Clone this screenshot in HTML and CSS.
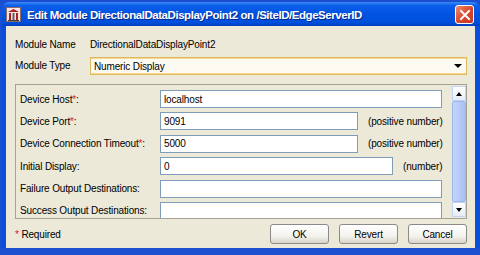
FILE: index.html
```html
<!DOCTYPE html>
<html lang="en">
<head>
    <meta charset="UTF-8">
    <title>Edit Module</title>
    <link rel="stylesheet" href="styles.css">
</head>
<body>
    <div class="window">
        <div class="title-bar">
            <svg class="title-icon" width="15" height="15" viewBox="0 0 15 15">
                <rect x="0.5" y="0.5" width="14" height="14" fill="#f4e4e4" stroke="#8a6a6a"/>
                <path d="M2 5 L7.5 2 L13 5 Z" fill="#b02020"/>
                <rect x="3" y="6" width="2" height="7" fill="#b02020"/>
                <rect x="6.5" y="6" width="2" height="7" fill="#606060"/>
                <rect x="10" y="6" width="2" height="7" fill="#b02020"/>
                <rect x="2" y="13" width="11" height="1" fill="#404040"/>
            </svg>
            <span class="title-text">Edit Module DirectionalDataDisplayPoint2 on /SiteID/EdgeServerID</span>
            <button class="close-btn">
                <svg width="12" height="12" viewBox="0 0 12 12">
                    <path d="M2 2 L10 10 M10 2 L2 10" stroke="white" stroke-width="2" stroke-linecap="square"/>
                </svg>
            </button>
        </div>

        <div class="content">
            <div class="top-row">
                <span class="top-label">Module Name</span>
                <span>DirectionalDataDisplayPoint2</span>
            </div>
            <div class="top-row">
                <span class="top-label">Module Type</span>
                <div class="combo">
                    <span>Numeric Display</span>
                    <span class="combo-arrow"></span>
                </div>
            </div>

            <div class="panel">
                <div class="fields">
                    <div class="field">
                        <label>Device Host<span class="req">*</span>:</label>
                        <input type="text" class="wide" value="localhost">
                    </div>
                    <div class="field">
                        <label>Device Port<span class="req">*</span>:</label>
                        <input type="text" class="short" value="9091">
                        <span class="hint">(positive number)</span>
                    </div>
                    <div class="field">
                        <label>Device Connection Timeout<span class="req">*</span>:</label>
                        <input type="text" class="short" value="5000">
                        <span class="hint">(positive number)</span>
                    </div>
                    <div class="field">
                        <label>Initial Display:</label>
                        <input type="text" class="medium" value="0">
                        <span class="hint">(number)</span>
                    </div>
                    <div class="field">
                        <label>Failure Output Destinations:</label>
                        <input type="text" class="wide" value="">
                    </div>
                    <div class="field">
                        <label>Success Output Destinations:</label>
                        <input type="text" class="wide" value="">
                    </div>
                </div>
                <div class="scrollbar">
                    <div class="scroll-btn"><span class="arrow-up"></span></div>
                    <div class="scroll-thumb"><span class="grip"></span></div>
                    <div class="scroll-btn"><span class="arrow-down"></span></div>
                </div>
            </div>

            <div class="footer">
                <span class="required-note"><span class="req">*</span> Required</span>
                <div class="buttons">
                    <button class="btn">OK</button>
                    <button class="btn">Revert</button>
                    <button class="btn">Cancel</button>
                </div>
            </div>
        </div>
    </div>
</body>
</html>
```

FILE: styles.css
```css
body {
    margin: 0;
    padding: 0;
    background-color: #1c4fd0;
    font-family: "Liberation Sans", Arial, sans-serif;
    font-size: 10px;
    letter-spacing: -0.15px;
    color: #000;
    overflow: hidden;
}
.window {
    margin: 2px 0 0 2px;
    width: 478px;
    height: 246px;
    display: flex;
    flex-direction: column;
}
.title-bar {
    height: 23px;
    display: flex;
    align-items: center;
    padding: 1px 6px 0 4px;
    border-radius: 7px 7px 0 0;
    background: linear-gradient(#3d8af7 0%, #0a5fea 15%, #0053e1 50%, #0050dc 85%, #003fc0 100%);
}
.title-icon {
    margin-right: 6px;
    flex-shrink: 0;
}
.title-text {
    flex: 1;
    color: white;
    font-family: "Liberation Sans", Arial, sans-serif;
    font-weight: bold;
    font-size: 11.5px;
    letter-spacing: -0.45px;
    text-shadow: 1px 1px 0 #0a2a8a;
    white-space: nowrap;
}
.close-btn {
    width: 19px;
    height: 19px;
    padding: 0;
    border: 1px solid white;
    border-radius: 3px;
    background: linear-gradient(135deg, #f08a6a, #d9452a 55%, #c0391f);
    display: flex;
    align-items: center;
    justify-content: center;
}
.content {
    flex: 1;
    background-color: #ece9d8;
    border-left: 4px solid #0a4fd9;
    border-right: 5px solid #0a4fd9;
    padding: 0 8px 0 9px;
    display: flex;
    flex-direction: column;
}
.top-row {
    display: flex;
    align-items: center;
    white-space: nowrap;
}
.top-row:first-child {
    height: 22px;
    margin-top: 7px;
}
.top-label {
    width: 75px;
    flex-shrink: 0;
}
.combo {
    flex: 1;
    height: 16px;
    margin-top: 2px;
    display: flex;
    align-items: center;
    justify-content: space-between;
    padding: 0 4px 0 3px;
    background-color: #fbf9f0;
    border: 1px solid #e0b860;
    box-shadow: inset 0 1px 0 #f6d88e, inset 0 -1px 0 #f6d88e;
}
.combo-arrow {
    width: 0;
    height: 0;
    border-left: 4px solid transparent;
    border-right: 4px solid transparent;
    border-top: 4px solid #000;
}
.panel {
    margin-top: 9px;
    height: 133px;
    border: 1px solid #a5a195;
    display: flex;
    overflow: hidden;
}
.fields {
    flex: 1;
    padding: 5px 0 0 4px;
    display: flex;
    flex-direction: column;
    gap: 4.4px;
}
.field {
    display: flex;
    align-items: center;
    height: 18px;
    flex-shrink: 0;
    white-space: nowrap;
}
.field label {
    width: 140px;
    flex-shrink: 0;
}
.req {
    color: #e0202a;
}
.field input {
    height: 18px;
    box-sizing: border-box;
    border: 1px solid #7f9db9;
    padding: 0 3px;
    font-family: inherit;
    font-size: 10px;
    letter-spacing: -0.15px;
    background: white;
}
.wide {
    width: 282px;
}
.short {
    width: 198px;
}
.medium {
    width: 233px;
}
.hint {
    margin-left: 10px;
}
.scrollbar {
    width: 14px;
    margin: 1px 0 1px 0;
    display: flex;
    flex-direction: column;
    background-color: #eef2fb;
}
.scroll-btn {
    height: 13px;
    display: flex;
    align-items: center;
    justify-content: center;
    background: linear-gradient(#ffffff, #e6ecf8);
    border: 1px solid #c3d3f5;
}
.arrow-up,
.arrow-down {
    width: 0;
    height: 0;
    border-left: 3.5px solid transparent;
    border-right: 3.5px solid transparent;
}
.arrow-up {
    border-bottom: 4px solid #000;
}
.arrow-down {
    border-top: 4px solid #000;
}
.scroll-thumb {
    flex: 1;
    background: linear-gradient(90deg, #c2d5fb, #b3c9f5 60%, #a8c0f0);
    border: 1px solid #9cb6ec;
    border-radius: 2px;
    display: flex;
    align-items: center;
    justify-content: center;
}
.grip {
    width: 8px;
    height: 16px;
    background-image: radial-gradient(#eef3ff 35%, transparent 40%);
    background-size: 2px 2px;
}
.footer {
    display: flex;
    align-items: center;
    justify-content: space-between;
    margin-top: 4px;
    height: 22px;
}
.buttons {
    display: flex;
    gap: 10px;
}
.btn {
    width: 59px;
    height: 20px;
    padding: 0;
    font-family: inherit;
    font-size: 10px;
    letter-spacing: -0.15px;
    color: #000;
    border: 1px solid #8a8a8a;
    border-radius: 3px;
    background: linear-gradient(#ffffff, #f4f3ee 60%, #d8d5c8);
}
```
